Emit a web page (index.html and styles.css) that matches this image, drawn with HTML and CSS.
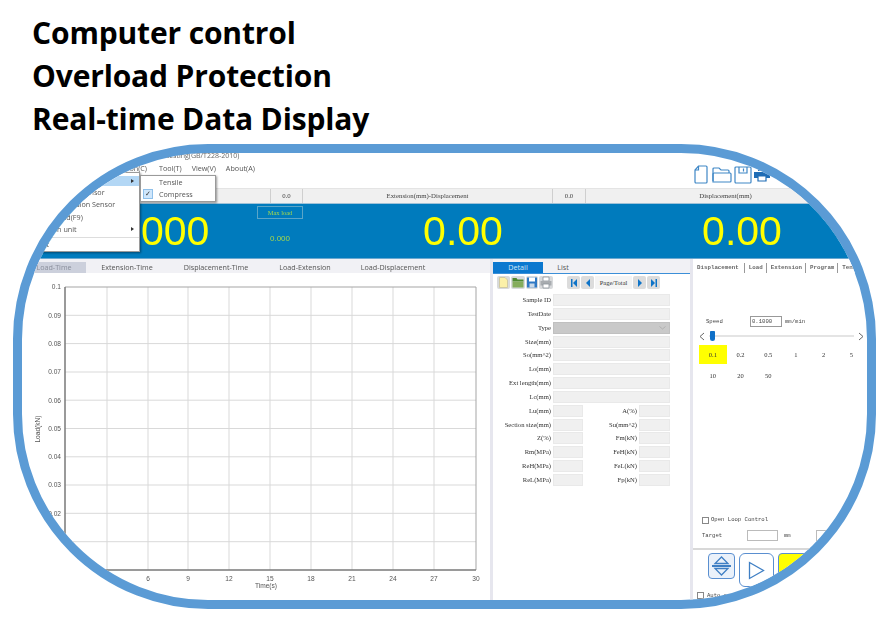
FILE: index.html
```html
<!DOCTYPE html>
<html lang="en">
<head>
<meta charset="utf-8">
<title>Computer control</title>
<link rel="stylesheet" href="styles.css">
</head>
<body>
<main class="page">
  <ul class="features">
    <li>Computer control</li>
    <li>Overload Protection</li>
    <li>Real-time Data Display</li>
  </ul>
  <section class="pill">
    <div class="app">
      <div class="titlebar">Tensile testing(GB/T228-2010)</div>
      <div class="menubar">
        <span class="menu-first">Operation(C)</span><span class="menu-tool">Tool(T)</span><span class="menu-view">View(V)</span><span class="menu-about">About(A)</span>
        <div class="big-tools">
          <svg class="big-icon" width="14" height="19" viewBox="0 0 14 19"><path d="M4.500 1H12a1 1 0 0 1 1 1v15a1 1 0 0 1-1 1H2a1 1 0 0 1-1-1V5z"/><path d="M4.500 1v4H1"/></svg>
          <svg class="big-icon icon-folder" width="21" height="16" viewBox="0 0 21 16"><path d="M1 14V2a1 1 0 0 1 1-1h5l2 2h7a1 1 0 0 1 1 1v2"/><path d="M1 15V7a1 1 0 0 1 1-1h16a1 1 0 0 1 1 1v7a1 1 0 0 1-1 1z"/></svg>
          <svg class="big-icon icon-save" width="18" height="18" viewBox="0 0 18 18"><path d="M2 1h14a1 1 0 0 1 1 1v14a1 1 0 0 1-1 1H2a1 1 0 0 1-1-1V2a1 1 0 0 1 1-1z"/><path d="M5 1v6h8V1M9.500 2.500v3"/></svg>
          <svg class="big-icon print" width="17" height="14" viewBox="0 0 17 14"><path class="solid" d="M4 0h8v3H4zM0 4h16v6H0z"/><path class="paper" d="M4 8h8v5H4z"/></svg>
        </div>
      </div>
      <div class="readout-head">
        <div class="head-cell"></div>
        <div class="head-cell">0.0</div>
        <div class="head-cell">Extension(mm)-Displacement</div>
        <div class="head-cell">0.0</div>
        <div class="head-cell">Displacement(mm)</div>
      </div>
      <div class="band">
        <div class="value value-load">0.000</div>
        <div class="max-col">
          <div class="max-label">Max load</div>
          <div class="max-value">0.000</div>
        </div>
        <div class="value">0.00</div>
        <div class="value">0.00</div>
      </div>
      <div class="workspace">
        <div class="chart-col">
          <div class="chart-tabs">
            <span class="chart-tab is-active">Load-Time</span>
            <span class="chart-tab">Extension-Time</span>
            <span class="chart-tab">Displacement-Time</span>
            <span class="chart-tab">Load-Extension</span>
            <span class="chart-tab">Load-Displacement</span>
          </div>
          <svg class="chart" width="468" height="327" viewBox="22 273 468 327">
            <g class="grid">
              <path d="M107 287V570M148 287V570M188 287V570M229 287V570M270 287V570M311 287V570M352 287V570M393 287V570M434 287V570"/>
              <path d="M65 315.300H476M65 343.600H476M65 372H476M65 400.200H476M65 428.500H476M65 456.800H476M65 485H476M65 513.300H476M65 541.700H476"/>
            </g>
            <path class="axis-top" d="M65 287H476V570"/>
            <path class="axis" d="M65 287V570H476"/>
            <g class="ylabels">
              <text x="61" y="289">0.1</text><text x="61" y="317.500">0.09</text><text x="61" y="345.800">0.08</text><text x="61" y="374">0.07</text><text x="61" y="402.500">0.06</text><text x="61" y="430.800">0.05</text><text x="61" y="459">0.04</text><text x="61" y="487.300">0.03</text><text x="61" y="515.500">0.02</text><text x="61" y="544">0.01</text>
            </g>
            <g class="xlabels">
              <text x="107" y="581">3</text><text x="148" y="581">6</text><text x="188" y="581">9</text><text x="229" y="581">12</text><text x="270" y="581">15</text><text x="311" y="581">18</text><text x="352" y="581">21</text><text x="393" y="581">24</text><text x="434" y="581">27</text><text x="476" y="581">30</text>
              <text x="266" y="588">Time(s)</text>
            </g>
            <text class="ytitle" transform="translate(40 429) rotate(-90)">Load(kN)</text>
          </svg>
        </div>
        <div class="detail-col">
          <div class="detail-tabs">
            <span class="detail-tab is-active">Detail</span>
            <span class="detail-tab">List</span>
          </div>
          <div class="detail-tools">
            <div class="file-tools">
              <svg class="mini" width="13" height="13" viewBox="0 0 13 13"><path fill="#fbf0a8" stroke="#c9c39a" stroke-width="0.8" d="M2.500 1.500h5.500l2.500 2.500v7.500h-8z"/></svg>
              <svg class="mini" width="14" height="13" viewBox="0 0 14 13"><path fill="#4f8a32" d="M1.500 2h4l1 1.500h6v2h-11z"/><path fill="#85ad5c" d="M1.500 5.500h11v6h-11z"/></svg>
              <svg class="mini" width="12" height="13" viewBox="0 0 12 13"><path fill="#2f78c4" d="M1 1.500h10v10H1z"/><path fill="#fff" d="M3 1.500h6v4H3z"/><path fill="#c8d8e8" d="M3.500 7.500h5v4h-5z"/></svg>
              <svg class="mini" width="14" height="13" viewBox="0 0 14 13"><path fill="#fff" stroke="#8a929a" stroke-width="0.8" d="M4 1h6v4H4z"/><path fill="#a8acb0" d="M1.500 5h11v4.500h-11z"/><path fill="#fff" stroke="#8a929a" stroke-width="0.8" d="M4 8h6v4H4z"/></svg>
            </div>
            <div class="pager">
              <span class="page-btn"><svg width="8" height="8" viewBox="0 0 8 8"><path class="nav" d="M1 0h1.500v8H1zM7 0v8L3 4z"/></svg></span>
              <span class="page-btn"><svg width="8" height="8" viewBox="0 0 8 8"><path class="nav" d="M6 0v8L2 4z"/></svg></span>
              <span class="page-total">Page/Total</span>
              <span class="page-btn"><svg width="8" height="8" viewBox="0 0 8 8"><path class="nav" d="M2 0v8l4-4z"/></svg></span>
              <span class="page-btn"><svg width="8" height="8" viewBox="0 0 8 8"><path class="nav" d="M1 0v8l4-4zM5.500 0H7v8H5.500z"/></svg></span>
            </div>
          </div>
          <div class="form">
            <label class="lbl">Sample ID</label><div class="field wide"></div>
            <label class="lbl">TestDate</label><div class="field wide"></div>
            <label class="lbl">Type</label><div class="field wide select"><svg width="7" height="4" viewBox="0 0 7 4"><path class="chev" d="M.5.500l3 2.500 3-2.500"/></svg></div>
            <label class="lbl">Size(mm)</label><div class="field wide"></div>
            <label class="lbl">So(mm^2)</label><div class="field wide"></div>
            <label class="lbl">Lo(mm)</label><div class="field wide"></div>
            <label class="lbl">Ext length(mm)</label><div class="field wide"></div>
            <label class="lbl">Lc(mm)</label><div class="field wide"></div>
            <label class="lbl">Lu(mm)</label><div class="field"></div><label class="lbl">A(%)</label><div class="field"></div>
            <label class="lbl">Section size(mm)</label><div class="field"></div><label class="lbl">Su(mm^2)</label><div class="field"></div>
            <label class="lbl">Z(%)</label><div class="field"></div><label class="lbl">Fm(kN)</label><div class="field"></div>
            <label class="lbl">Rm(MPa)</label><div class="field"></div><label class="lbl">FeH(kN)</label><div class="field"></div>
            <label class="lbl">ReH(MPa)</label><div class="field"></div><label class="lbl">FeL(kN)</label><div class="field"></div>
            <label class="lbl">ReL(MPa)</label><div class="field"></div><label class="lbl">Fp(kN)</label><div class="field"></div>
          </div>
        </div>
        <div class="control-col">
          <div class="control-tabs">
            <span class="control-tab">Displacement</span><span class="control-tab">Load</span><span class="control-tab">Extension</span><span class="control-tab">Program</span><span class="control-tab">Tensile</span>
          </div>
          <div class="speed-row">
            <span class="speed-label">Speed</span>
            <span class="speed-input">0.1000</span>
            <span>mm/min</span>
          </div>
          <div class="slider-row">
            <svg class="slider-arrow" width="6" height="9" viewBox="0 0 6 9"><path d="M5 1L1 4.500 5 8"/></svg>
            <div class="slider-track"><span class="slider-thumb"></span></div>
            <svg class="slider-arrow" width="6" height="9" viewBox="0 0 6 9"><path d="M1 1l4 3.500L1 8"/></svg>
          </div>
          <div class="presets">
            <span class="preset is-active">0.1</span><span class="preset">0.2</span><span class="preset">0.5</span><span class="preset">1</span><span class="preset">2</span><span class="preset">5</span>
            <span class="preset">10</span><span class="preset">20</span><span class="preset">50</span>
          </div>
          <div class="bottom">
            <div class="loop-row"><span class="check"></span><span>Open Loop Control</span></div>
            <div class="target-row">
              <span class="target-label">Target</span>
              <span class="target-input"></span>
              <span class="target-unit">mm</span>
              <span class="target-input"></span>
            </div>
            <div class="actions">
              <button class="action updown" type="button"><svg width="21" height="20" viewBox="0 0 21 20"><path class="act" d="M10.500 1L4 7.500h13z"/><path class="act-bar" d="M1 10h19"/><path class="act" d="M10.500 19L4 12.500h13z"/></svg></button>
              <button class="action play" type="button"><svg width="17" height="19" viewBox="0 0 17 19"><path class="act" d="M1.500 1.500l14 8-14 8z"/></svg></button>
              <button class="action stop" type="button"></button>
            </div>
            <div class="auto-row"><span class="check"></span><span>Auto return</span></div>
          </div>
        </div>
      </div>
    </div>
    <div class="dropdown">
      <div class="drop-item is-hot"><span>Test type</span><i class="caret"></i></div>
      <div class="drop-item"><span>Deformation Sensor</span></div>
      <div class="drop-item"><span>Large Extension Sensor</span></div>
      <div class="drop-item"><span>Zero Load(F9)</span></div>
      <div class="drop-item"><span>Section unit</span><i class="caret"></i></div>
      <div class="drop-sep"></div>
      <div class="drop-item"><span>Exit</span></div>
    </div>
    <div class="submenu">
      <div class="sub-item"><span class="sub-gutter"></span><span>Tensile</span></div>
      <div class="sub-item"><span class="sub-gutter is-checked">&#10003;</span><span>Compress</span></div>
    </div>
  </section>
</main>
</body>
</html>
```
FILE: styles.css
```css
* { box-sizing: border-box; }
html, body { margin: 0; padding: 0; background: #fff; }
body { font-family: "Open Sans", "Liberation Sans", sans-serif; overflow: hidden; }

.page { width: 886px; height: 638px; padding: 11px 10px 0 13px; }

.features {
  list-style: none; margin: 0 0 4px; padding: 0 0 0 19px;
  font-size: 30px; font-weight: 700; line-height: 43px; color: #000;
  letter-spacing: -0.15px;
}

.pill {
  position: relative; width: 863px; height: 465px;
  border: 9px solid #5b9bd5; border-radius: 195px;
  overflow: hidden; background: #fff;
}

.app { width: 845px; height: 447px; filter: blur(0.45px); color: #444; display: flex; flex-direction: column; }

.titlebar { height: 10px; padding-left: 120px; font: 7px/6px "Open Sans", sans-serif; color: #666; }

.menubar { height: 25px; display: flex; align-items: flex-start; font-size: 7.2px; line-height: 10px; color: #555; position: relative; }
.menu-first { margin-left: 66px; width: 59px; text-align: right; }
.menu-tool { margin-left: 12px; }
.menu-view { margin-left: 10px; }
.menu-about { margin-left: 10px; }
.big-tools { margin-left: auto; margin-right: 96px; display: flex; align-items: center; margin-top: 2px; }
.big-icon { fill: none; stroke: #3f87c6; stroke-width: 1.2; display: block; }
.icon-folder { margin-left: 4px; }
.icon-save { margin-left: 1px; }
.print { margin-left: 2px; }
.print .solid { fill: #1f6db5; stroke: none; }
.print .paper { fill: #fff; stroke: #1f6db5; }

.readout-head {
  height: 16px; display: grid; grid-template-columns: 249px 32px 250px 33px 1fr;
  background: #f0f0f0; border-top: 1px solid #e4e4e4; border-bottom: 1px solid #9fc2d8;
  font: 6.8px/14px "Liberation Serif", serif; color: #444; text-align: center;
}
.head-cell { border-right: 1px solid #cfcfcf; }
.head-cell:last-child { border-right: 0; padding-right: 2px; }

.band {
  height: 55px; background: #007bbd; display: grid; grid-template-columns: 235px 46px 320px 238px;
  border-bottom: 1px solid #6aa8d0;
}
.value { font: 41px/55px "Liberation Sans", sans-serif; color: #ffff00; text-align: center; }
.value-load { padding-left: 37px; }
.max-col { padding-top: 2px; text-align: center; color: #a5d84a; }
.max-label { height: 13px; border: 1px solid #5aa5c8; font: 6.5px/11px "Liberation Serif", serif; }
.max-value { margin-top: 14px; font: 8px/12px "Liberation Sans", sans-serif; }

.workspace { flex: 1; display: flex; min-height: 0; font-size: 7px; }

.chart-col { width: 471px; border-right: 3px solid #e6e6ee; display: flex; flex-direction: column; }
.chart-tabs { height: 14px; padding-top: 3px; background: #f1f1f5; display: grid; grid-template-columns: 64px 82px 96px 82px 94px; }
.chart-tab { font-size: 7.2px; line-height: 11px; text-align: center; color: #555; white-space: nowrap; }
.chart-tab.is-active { background: #ccd0dc; color: #8a8f9c; }
.chart { display: block; }
.grid path { fill: none; stroke: #d9d9d9; stroke-width: 1; }
.axis { fill: none; stroke: #7a7a7a; stroke-width: 1.5; }
.axis-top { fill: none; stroke: #a5a5a5; stroke-width: 1; }
.ylabels text { font: 6.6px "Liberation Sans", sans-serif; fill: #555; text-anchor: end; }
.xlabels text { font: 6.6px "Liberation Sans", sans-serif; fill: #555; text-anchor: middle; }
.ytitle { font: 6.6px "Liberation Sans", sans-serif; fill: #555; text-anchor: middle; }

.detail-col { width: 197px; display: flex; flex-direction: column; }
.detail-tabs { height: 15px; padding-top: 3px; display: flex; border-bottom: 1px solid #3b8fd8; background: #f1f1f5; }
.detail-tab { width: 40px; font-size: 7.2px; line-height: 11px; text-align: center; color: #555; }
.detail-tab.is-active { width: 50px; background: #0b78cf; color: #cfe6f8; }
.detail-tools { height: 20px; padding: 2px 0 0 4px; display: flex; align-items: flex-start; background: #fff; }
.file-tools { display: flex; gap: 1px; width: 70px; }
.mini { display: block; background: #d8dadc; border-radius: 2px; }
.pager { display: flex; gap: 1px; height: 13px; }
.page-btn { width: 13px; display: flex; align-items: center; justify-content: center; background: #dcdcdc; border-radius: 2px; }
.nav { fill: #0f74c8; }
.page-total { width: 37px; font: 6.5px/13px "Liberation Serif", serif; text-align: center; background: #f4f4f4; color: #333; }

.form {
  display: grid; grid-template-columns: 60px 30px 56px 31px;
  grid-auto-rows: 12px; row-gap: 1.85px;
}
.lbl { font: 6.6px/12px "Liberation Serif", serif; color: #333; text-align: right; padding-right: 2px; white-space: nowrap; }
.field { background: #f0f0f0; border: 1px solid #e9e9e9; }
.field.wide { grid-column: 2 / 5; }
.field.select { background: #c9c9c9; border-color: #c0c0c0; display: flex; align-items: center; justify-content: flex-end; padding-right: 3px; }
.chev { fill: none; stroke: #aaa; stroke-width: 0.8; }

.control-col {
  flex: 1; min-width: 0; border-left: 3px solid #e6e6ee; display: flex; flex-direction: column;
  font: 5.6px/10px "Liberation Mono", monospace; color: #444;
}
.control-tabs { height: 14px; padding: 4px 0 0 3px; display: flex; white-space: nowrap; overflow: hidden; background: #fff; font-size: 5.8px; }
.control-tab { padding: 0 3px 0 4px; border-right: 1px solid #999; line-height: 9px; height: 10px; font-weight: 700; color: #666; }
.control-tab:first-child { padding-left: 1px; padding-right: 5px; }
.speed-row { margin-top: 43px; padding-left: 13px; height: 11px; display: flex; align-items: center; }
.speed-label { width: 44px; }
.speed-input { width: 32px; height: 11px; margin-right: 3px; border: 1px solid #999; padding-left: 1px; line-height: 9px; }
.slider-row { margin-top: 4px; height: 10px; padding: 0 1px 0 6px; width: 172px; display: flex; align-items: center; gap: 4px; }
.slider-arrow { flex: none; fill: none; stroke: #666; stroke-width: 1; }
.slider-track { position: relative; flex: 1; height: 2px; background: #e4e4e4; }
.slider-thumb { position: absolute; left: 1px; top: -4px; width: 5px; height: 10px; background: #1070c8; border-radius: 1px 1px 3px 3px; }
.presets { margin: 4px 0 0 6px; display: grid; grid-template-columns: repeat(6, 27.7px); grid-auto-rows: 19px; row-gap: 2px; font: 6.5px/19px "Liberation Serif", serif; text-align: center; color: #333; }
.preset.is-active { background: #ffff00; }

.bottom { margin-top: auto; height: 85px; display: flex; flex-direction: column; }
.loop-row { height: 10px; padding-left: 9px; display: flex; align-items: center; gap: 2px; }
.check { width: 7px; height: 7px; border: 1px solid #888; background: #fff; flex: none; }
.target-row { margin-top: 5px; height: 11px; padding-left: 9px; display: flex; align-items: center; }
.target-label { width: 45px; }
.target-input { width: 31px; height: 11px; border: 1px solid #bbb; flex: none; }
.target-unit { width: 38px; padding-left: 6px; }
.actions { margin-top: 7px; border-top: 2px solid #d8d8d8; padding: 3px 0 0 15px; display: flex; align-items: flex-start; gap: 4px; height: 39px; }
.action { padding: 0; background: #fff; border: 1.5px solid #5a8fd0; border-radius: 4px; display: flex; align-items: center; justify-content: center; flex: none; }
.updown { width: 27px; height: 26px; background: #eaf1fa; }
.play { width: 35px; height: 34px; border-radius: 6px; }
.stop { width: 36px; height: 34px; background: #ffff00; }
.act { fill: none; stroke: #3f7fc4; stroke-width: 1.3; }
.act-bar { stroke: #3f7fc4; stroke-width: 2; }
.auto-row { margin-top: 5px; padding-left: 4px; height: 7px; display: flex; align-items: center; gap: 3px; }

.dropdown {
  position: absolute; left: -13px; top: 19px; width: 131px; height: 80px; padding-top: 3px;
  background: #fff; border: 1px solid #9a9a9a; box-shadow: 1px 1px 2px rgba(0,0,0,.4);
  font-size: 7.2px; color: #555; filter: blur(0.4px);
}
.drop-item { position: relative; height: 12.3px; line-height: 12.3px; padding-left: 27px; white-space: nowrap; }
.drop-item.is-hot { height: 10px; line-height: 10px; background: #b3d7f5; }
.caret { position: absolute; right: 5px; top: 4px; width: 0; height: 0; border-left: 3px solid #333; border-top: 2.5px solid transparent; border-bottom: 2.5px solid transparent; }
.is-hot .caret { top: 2.5px; }
.drop-sep { height: 1px; margin-top: 1.5px; background: #ddd; }

.submenu {
  position: absolute; left: 118px; top: 22px; width: 76px; height: 27px;
  background: #fff; border: 1px solid #9a9a9a; box-shadow: 1px 1px 2px rgba(0,0,0,.4);
  font-size: 7.2px; color: #555; filter: blur(0.4px);
}
.sub-item { height: 12px; line-height: 12px; display: flex; align-items: center; gap: 6px; padding-left: 2px; }
.sub-gutter { width: 10px; height: 10px; font-size: 7px; line-height: 9px; text-align: center; flex: none; }
.sub-gutter.is-checked { background: #cfe6fb; border: 1px solid #8fc0ea; color: #333; font-family: "DejaVu Sans", sans-serif; }
```
